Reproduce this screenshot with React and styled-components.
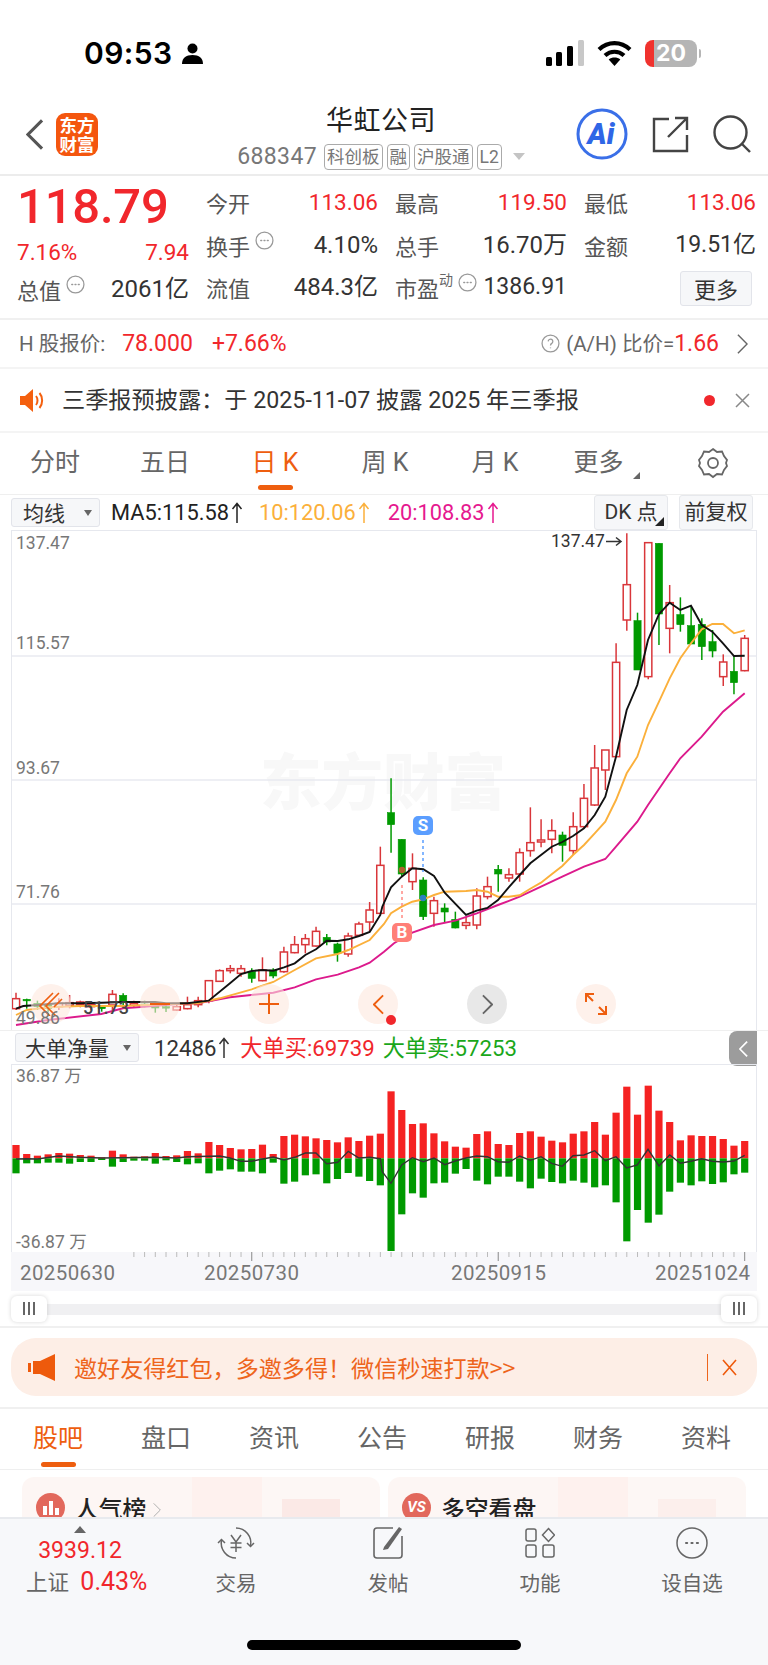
import React from 'react';
import styled, { createGlobalStyle } from 'styled-components';

const GlobalStyle = createGlobalStyle`
  html, body { margin: 0; padding: 0; background: #fff; }
  body { font-family: Roboto, "Noto Sans CJK SC", sans-serif; color: #333; }
  * { box-sizing: border-box; }
`;

const Page = styled.div`
  width: 768px;
  height: 1665px;
  overflow: hidden;
  position: relative;
  background: #fff;
`;

/* status bar */
const StatusBar = styled.div`
  height: 90px;
  padding: 16px 67px 0 84px;
  display: flex;
  align-items: center;
  justify-content: space-between;
`;
const Clock = styled.div`
  display: flex;
  align-items: center;
  gap: 9px;
  font: 600 30px Inter, sans-serif;
  letter-spacing: 0.4px;
  color: #000;
`;
const StatusIcons = styled.div`
  display: flex;
  align-items: center;
  gap: 13px;
`;
const Battery = styled.div`
  width: 52px;
  height: 27px;
  border-radius: 8px;
  overflow: hidden;
  background: linear-gradient(90deg, #f0322e 0 9px, #b5b5b5 9px);
  color: #fff;
  font: 700 23px/27px Inter, sans-serif;
  text-align: center;
`;
const BatteryWrap = styled.div`
  display: flex;
  align-items: center;
  gap: 2px;
  &::after {
    content: '';
    width: 2px;
    height: 9px;
    border-radius: 0 2px 2px 0;
    background: #b5b5b5;
  }
`;

/* nav */
const Nav = styled.div`
  height: 86px;
  display: grid;
  grid-template-columns: 226px 310px 1fr;
  align-items: center;
  border-bottom: 2px solid #ececec;
`;
const NavLeft = styled.div`
  display: flex;
  align-items: center;
  gap: 12px;
  padding: 4px 0 0 26px;
`;
const Logo = styled.div`
  width: 42px;
  height: 43px;
  border-radius: 9px;
  background: #f4560e;
  color: #fff;
  font: 700 17.5px/19px "Noto Sans CJK SC", sans-serif;
  text-align: center;
  padding-top: 2px;
`;
const NavCenter = styled.div`
  align-self: start;
  padding-top: 11px;
  display: flex;
  flex-direction: column;
  align-items: center;
`;
const Title = styled.div`
  font: 400 27px/36px "Noto Sans CJK SC", sans-serif;
  color: #222;
  letter-spacing: 0.5px;
`;
const SubRow = styled.div`
  margin-top: 6px;
  display: flex;
  align-items: center;
  gap: 4px;
`;
const Code = styled.span`
  font: 400 23px/27px Roboto, sans-serif;
  letter-spacing: 0.4px;
  color: #777;
  margin-right: 3px;
`;
const Tag = styled.span`
  border: 1px solid #aaa;
  border-radius: 4px;
  height: 26px;
  padding: 0 2px;
  font: 400 17.5px/24px Roboto, "Noto Sans CJK SC", sans-serif;
  color: #777;
`;
const Caret = styled.span`
  width: 0;
  height: 0;
  margin-left: 7px;
  border-left: 6px solid transparent;
  border-right: 6px solid transparent;
  border-top: 7px solid #c4c4c4;
`;
const NavRight = styled.div`
  display: flex;
  align-items: center;
  justify-content: flex-end;
  gap: 24px;
  padding: 4px 17px 0 0;
`;

/* quote */
const Quote = styled.div`
  height: 144px;
  display: flex;
  padding: 5px 12px 0 17px;
  border-bottom: 2px solid #f0f0f0;
`;
const QuoteLeft = styled.div`
  width: 172px;
  margin-right: 17px;
  flex: none;
`;
const Price = styled.div`
  font: 500 49px/52px Roboto, sans-serif;
  color: #f1272c;
  letter-spacing: -0.2px;
`;
const SplitRow = styled.div`
  height: 37px;
  display: flex;
  align-items: center;
  justify-content: space-between;
`;
const StatGrid = styled.div`
  flex: 1;
  display: grid;
  grid-template-columns: repeat(3, 172px);
  grid-auto-rows: 42.5px;
  column-gap: 17px;
`;
const Stat = styled.div`
  display: flex;
  align-items: center;
  justify-content: space-between;
`;
const StatLabel = styled.span`
  display: flex;
  align-items: flex-start;
  font: 400 22px/30px "Noto Sans CJK SC", sans-serif;
  color: #555;
  svg { margin: 1px 0 0 5px; }
`;
const Super = styled.sup`
  font-size: 14px;
  line-height: 14px;
  color: #666;
  vertical-align: top;
`;
const Value = styled.span`
  font: 400 ${p => p.$size || 22.5}px/30px Roboto, "Noto Sans CJK SC", sans-serif;
  color: ${p => (p.$red ? '#f1272c' : '#333')};
`;
const MoreButton = styled.div`
  width: 72px;
  height: 35px;
  margin: 3px 4px 0 auto;
  border: 1px solid #e2e4ea;
  border-radius: 3px;
  background: #f6f7f9;
  font: 400 22px/33px "Noto Sans CJK SC", sans-serif;
  color: #333;
  text-align: center;
`;

/* h share row */
const HRow = styled.div`
  height: 49px;
  display: flex;
  align-items: center;
  padding: 0 20px 0 19px;
  border-bottom: 2px solid #f4f4f4;
  font: 400 20.5px/28px Roboto, "Noto Sans CJK SC", sans-serif;
  color: #666;
`;
const RedText = styled.span`
  color: #f1272c;
  margin-left: ${p => p.$ml || 0}px;
  font-size: ${p => p.$size || 23}px;
`;
const RowEnd = styled.div`
  margin-left: auto;
  display: flex;
  align-items: center;
  gap: 6px;
`;

/* notice */
const Notice = styled.div`
  height: 64px;
  display: flex;
  align-items: center;
  padding: 0 18px 0 20px;
  border-bottom: 2px solid #f4f4f4;
  font: 400 23.2px/30px Roboto, "Noto Sans CJK SC", sans-serif;
  color: #333;
`;
const NoticeText = styled.span`
  margin-left: 18px;
  flex: 1;
`;
const RedDot = styled.span`
  width: 11px;
  height: 11px;
  border-radius: 50%;
  background: #f1272c;
  margin-right: 20px;
`;

/* period tabs */
const Tabs = styled.div`
  height: 61px;
  display: grid;
  grid-template-columns: ${p => p.$cols};
  padding-left: ${p => p.$pad || 0}px;
  border-bottom: ${p => (p.$line ? '1px solid #efefef' : 'none')};
`;
const TabItem = styled.div`
  position: relative;
  display: flex;
  justify-content: center;
  align-items: center;
  font: 400 ${p => p.$size || 25}px/34px Roboto, "Noto Sans CJK SC", sans-serif;
  color: ${p => (p.$active ? '#ee5e0f' : '#666')};
  padding-bottom: ${p => p.$pb ?? 2}px;
  &::after {
    content: '';
    display: ${p => (p.$active ? 'block' : 'none')};
    position: absolute;
    left: 50%;
    bottom: ${p => p.$ub ?? 4}px;
    width: 35px;
    height: 5px;
    margin-left: -17.5px;
    border-radius: 3px;
    background: #ee5e0f;
  }
`;
const MoreCorner = styled.span`
  position: absolute;
  right: 7px;
  bottom: 15px;
  width: 0;
  height: 0;
  border-left: 7px solid transparent;
  border-bottom: 7px solid #666;
`;

/* legend */
const LegendRow = styled.div`
  height: 36px;
  display: flex;
  align-items: center;
  padding: 0 15px 0 11px;
  font: 400 21.8px/30px Roboto, "Noto Sans CJK SC", sans-serif;
  border-top: 1px solid #efefef;
`;
const SelectBox = styled.div`
  width: ${p => p.$w}px;
  height: 29px;
  flex: none;
  display: flex;
  align-items: center;
  justify-content: space-between;
  padding: 0 7px 0 ${p => p.$pl || 11}px;
  background: #f6f7f9;
  border: 1px solid #e2e4ea;
  border-radius: 3px;
  font: 400 21px/27px "Noto Sans CJK SC", sans-serif;
  color: #333;
`;
const DownTri = styled.span`
  width: 0;
  height: 0;
  border-left: 4px solid transparent;
  border-right: 4px solid transparent;
  border-top: 6px solid #666;
`;
const Reading = styled.span`
  display: inline-flex;
  align-items: center;
  gap: 2px;
  margin-left: ${p => p.$ml}px;
  color: ${p => p.$color};
  white-space: nowrap;
`;
const LegendButton = styled.div`
  position: relative;
  flex: none;
  width: 74px;
  height: 35px;
  margin-left: ${p => p.$ml};
  background: #f6f7f9;
  border: 1px solid #e6e8ec;
  border-radius: 3px;
  font: 400 21px/33px Roboto, "Noto Sans CJK SC", sans-serif;
  color: #333;
  text-align: center;
`;
const BoxCorner = styled.span`
  position: absolute;
  right: 3px;
  bottom: 3px;
  width: 0;
  height: 0;
  border-left: 9px solid transparent;
  border-bottom: 9px solid #222;
`;

/* charts */
const ChartBox = styled.div`
  position: relative;
  width: 746px;
  height: ${p => p.$h}px;
  margin-left: 11px;
  border-left: 1px solid #e6e8ee;
  border-right: 1px solid #e6e8ee;
  border-top: 1px solid #e6e8ee;
  svg { display: block; }
`;
const ChartLayer = styled.div`
  position: relative;
`;
const AxisLabel = styled.span`
  position: absolute;
  left: 4px;
  top: ${p => p.$top}px;
  font: 400 17.5px/20px Roboto, "Noto Sans CJK SC", sans-serif;
  color: #777;
`;
const PeakLabel = styled.span`
  position: absolute;
  left: 539px;
  top: 0;
  font: 400 17.5px/20px Roboto, sans-serif;
  color: #333;
`;
const LastLabel = styled.span`
  position: absolute;
  left: 71px;
  top: 467px;
  font: 500 18px/20px Roboto, sans-serif;
  color: #444;
`;
const Watermark = styled.div`
  position: absolute;
  left: 248px;
  top: 213px;
  font: 900 61.5px/70px "Noto Sans CJK SC", sans-serif;
  color: #f8f8f8;
  white-space: nowrap;
`;
const Controls = styled.div`
  position: absolute;
  left: 19px;
  top: 453px;
  display: flex;
  gap: 69px;
`;
const RoundButton = styled.div`
  width: 40px;
  height: 40px;
  border-radius: 50%;
  display: flex;
  align-items: center;
  justify-content: center;
  background: ${p => (p.$gray ? 'rgba(228,228,228,0.85)' : 'rgba(253,232,222,0.6)')};
  position: relative;
`;
const ControlDot = styled.span`
  position: absolute;
  left: 28px;
  top: 31px;
  width: 10px;
  height: 10px;
  border-radius: 50%;
  background: #f1272c;
`;
const Badge = styled.span`
  position: absolute;
  left: ${p => p.$x}px;
  top: ${p => p.$y}px;
  width: 20px;
  height: 19px;
  border-radius: 5px;
  background: ${p => p.$bg};
  color: #fff;
  font: 700 17px/19px Roboto, sans-serif;
  text-align: center;
`;

const VolHead = styled.div`
  position: relative;
  height: 34px;
  display: flex;
  align-items: center;
  padding-left: 15px;
  font: 400 22.2px/28px Roboto, "Noto Sans CJK SC", sans-serif;
  border-top: 1px solid #efefef;
`;
const SideTab = styled.div`
  position: absolute;
  left: 729px;
  top: 0;
  width: 28px;
  height: 35px;
  border-radius: 8px 0 0 8px;
  background: #9c9c9c;
  display: flex;
  align-items: center;
  justify-content: center;
`;
const AxisBand = styled.div`
  position: relative;
  width: 746px;
  height: 39px;
  margin-left: 11px;
  background: #f7f7fa;
  svg { display: block; }
`;
const AxisDate = styled.span`
  position: absolute;
  left: ${p => p.$x}px;
  top: 10px;
  font: 400 20.5px/22px Roboto, sans-serif;
  letter-spacing: 0.4px;
  color: #777;
`;
const Scroller = styled.div`
  position: relative;
  width: 746px;
  height: 35px;
  margin-left: 11px;
  display: flex;
  align-items: center;
  justify-content: space-between;
  &::before {
    content: '';
    position: absolute;
    left: 0;
    right: 0;
    top: 13px;
    height: 11px;
    background: #f0f0f2;
  }
`;
const Handle = styled.div`
  position: relative;
  width: 36px;
  height: 26px;
  border-radius: 6px;
  background: #fff;
  box-shadow: 0 0 4px rgba(0, 0, 0, 0.16);
  display: flex;
  align-items: center;
  justify-content: center;
  gap: 3px;
  span {
    width: 2px;
    height: 13px;
    background: #666;
  }
`;
const Rule = styled.div`
  height: 2px;
  background: #f0f0f0;
`;

/* promo banner */
const Banner = styled.div`
  height: 58px;
  margin: 10px 11px 11px;
  padding: 0 20px 0 17px;
  border-radius: 25px;
  background: #fdeee6;
  display: flex;
  align-items: center;
  font: 400 23.1px/30px "Noto Sans CJK SC", sans-serif;
  color: #ee651c;
`;
const BannerText = styled.span`
  margin-left: 18px;
  flex: 1;
`;
const BannerSep = styled.span`
  width: 1px;
  height: 27px;
  background: #ee651c;
  margin-right: 14px;
`;

/* feed */
const Feed = styled.div`
  height: 47px;
  padding: 7px 22px 0;
  display: grid;
  grid-template-columns: 358px 358px;
  column-gap: 8px;
  overflow: hidden;
`;
const FeedCard = styled.div`
  position: relative;
  height: 80px;
  border-radius: 12px;
  background: linear-gradient(90deg, #fdf6f4 0 170px, #fef1ee 170px 240px, #fdf7f5 240px);
  padding: 16px 14px;
  display: flex;
  align-items: flex-start;
  align-self: start;
  gap: 10px;
  &::after {
    content: '';
    position: absolute;
    left: ${p => p.$shapeX}px;
    top: 22px;
    width: 58px;
    height: 60px;
    background: ${p => p.$shape};
  }
`;
const FeedIcon = styled.span`
  flex: none;
  width: 29px;
  height: 29px;
  border-radius: 50%;
  background: #e2685c;
  display: flex;
  align-items: center;
  justify-content: center;
  color: #fff;
  font: italic 700 15px/29px Roboto, sans-serif;
`;
const FeedTitle = styled.span`
  font: 500 23.8px/30px "Noto Sans CJK SC", sans-serif;
  color: #222;
  svg { margin-left: 7px; }
`;

/* bottom bar */
const BottomBar = styled.div`
  position: absolute;
  left: 0;
  right: 0;
  bottom: 0;
  height: 148px;
  background: #f7f8fa;
  border-top: 2px solid #e8eaee;
  display: grid;
  grid-template-columns: 160px repeat(4, 152px);
`;
const IndexCell = styled.div`
  display: flex;
  flex-direction: column;
  align-items: center;
  padding-top: 7px;
`;
const UpTri = styled.span`
  width: 0;
  height: 0;
  border-left: 6px solid transparent;
  border-right: 6px solid transparent;
  border-bottom: 7px solid #666;
`;
const IndexValue = styled.span`
  margin-top: 4px;
  font: 400 23px/28px Roboto, sans-serif;
  color: #f1272c;
`;
const IndexRow = styled.span`
  align-self: flex-start;
  margin: 1px 0 0 26px;
  font: 400 21.5px/32px Roboto, "Noto Sans CJK SC", sans-serif;
  color: #666;
  white-space: nowrap;
`;
const DockItem = styled.div`
  display: flex;
  flex-direction: column;
  align-items: center;
  padding-top: 1px;
  font: 400 20.5px/28px "Noto Sans CJK SC", sans-serif;
  color: #666;
  svg { margin-bottom: 2px; }
`;
const HomeBar = styled.div`
  position: absolute;
  left: 247px;
  bottom: 15px;
  width: 274px;
  height: 10px;
  border-radius: 5px;
  background: #000;
`;

/* chart data, read in 3x zoom coordinates */
const c3 = (...r) => r;
const candles = [
  c3('r',1388,1406,1436,1440),c3('g',1406,1408,1412,1436),c3('g',1412,1420,1430,1440),c3('g',1420,1425,1435,1445),
  c3('r',1405,1420,1430,1440),c3('r',1395,1418,1426,1435),c3('r',1412,1416,1424,1432),c3('r',1420,1424,1430,1440),
  c3('g',1425,1430,1436,1445),c3('r',1380,1393,1425,1440),c3('g',1390,1396,1418,1430),c3('r',1412,1420,1426,1432),
  c3('g',1412,1422,1426,1432),c3('g',1418,1428,1434,1448),c3('g',1422,1430,1434,1446),c3('r',1420,1430,1440,1442),
  c3('r',1400,1424,1436,1438),c3('r',1400,1412,1424,1432),c3('r',1350,1352,1412,1420),c3('r',1318,1322,1354,1356),
  c3('r',1305,1316,1322,1330),c3('r',1305,1316,1330,1340),c3('g',1315,1325,1345,1358),c3('r',1282,1320,1352,1354),
  c3('g',1315,1320,1338,1345),c3('r',1250,1266,1325,1328),c3('r',1218,1244,1268,1270),c3('r',1212,1226,1244,1270),
  c3('r',1190,1204,1248,1250),c3('g',1212,1222,1236,1246),c3('g',1238,1242,1270,1295),c3('r',1208,1218,1272,1280),
  c3('r',1175,1182,1216,1220),c3('r',1116,1140,1176,1205),c3('r',950,1006,1150,1150),
  c3('g',745,848,884,968),c3('g',928,928,1032,1040),c3('r',970,1015,1055,1080),c3('g',1042,1050,1160,1170),
  c3('r',1100,1112,1150,1190),c3('g',1120,1134,1146,1178),c3('g',1145,1168,1194,1195),c3('r',1160,1178,1186,1198),
  c3('r',1075,1098,1185,1198),c3('r',1040,1070,1100,1108),c3('g',1005,1018,1032,1085),c3('r',1015,1034,1044,1055),
  c3('r',955,968,1032,1055),c3('r',832,938,962,980),c3('r',868,930,936,952),c3('r',868,902,928,970),
  c3('g',905,915,946,995),c3('r',847,890,962,975),c3('r',762,805,890,895),c3('r',645,714,825,828),
  c3('r',660,660,720,780),c3('r',340,397,680,680),c3('r',10,164,270,302),c3('g',248,272,420,420),
  c3('r',38,38,440,448),c3('g',40,40,252,345),c3('r',165,218,295,370),c3('g',202,254,284,305),
  c3('g',228,287,342,342),c3('g',265,283,350,390),c3('g',300,335,363,382),c3('r',373,396,440,468),
  c3('g',378,424,458,493),c3('r',315,325,422,424),
];
const STEP = 10.716;
const cx = (i) => 16 + i * STEP;
const py = (z) => 530 + z / 3;

// pts before the split are in the left crop, after it in the right crop
const toPoints = (left, right, base) => [
  ...left.map(([x, y]) => `${(x / 3).toFixed(1)},${(base + y / 3).toFixed(1)}`),
  ...right.map(([x, y]) => `${(384 + x / 3).toFixed(1)},${(base + y / 3).toFixed(1)}`),
].join(' ');

const ma5 = toPoints(
  [[48,1436],[70,1428],[112,1425],[176,1420],[240,1420],[304,1418],[369,1416],[465,1416],[498,1420],[562,1420],[626,1412],[690,1360],[723,1332],[755,1323],[788,1320],[820,1322],[852,1312],[884,1300],[916,1275],[948,1258],[980,1232],[1013,1233],[1045,1228],[1077,1218],[1109,1206],[1141,1155]],
  [[-5,1130],[21,1072],[53,1040],[85,1015],[118,1018],[150,1038],[182,1088],[246,1155],[278,1142],[310,1134],[342,1110],[374,1072],[407,1035],[439,1000],[471,975],[503,950],[535,936],[567,918],[600,895],[632,855],[664,800],[696,680],[728,540],[760,465],[792,330],[825,252],[857,218],[889,240],[921,227],[953,285],[985,305],[1017,340],[1050,378],[1082,377]],
  530,
);
const ma10 = toPoints(
  [[48,1455],[80,1440],[144,1432],[240,1428],[369,1428],[498,1422],[594,1420],[659,1405],[755,1378],[820,1356],[884,1320],[948,1285],[1013,1272],[1045,1260],[1109,1230]],
  [[0,1182],[21,1150],[53,1130],[85,1115],[118,1108],[150,1095],[182,1085],[246,1083],[278,1080],[310,1085],[342,1100],[374,1100],[407,1096],[439,1076],[471,1058],[503,1033],[535,1008],[567,975],[600,945],[632,910],[664,875],[696,810],[728,730],[760,680],[792,585],[825,515],[857,445],[889,385],[921,340],[953,298],[985,282],[1017,282],[1050,310],[1082,301]],
  530,
);
const ma20 = toPoints(
  [[48,1485],[144,1470],[304,1452],[369,1435],[433,1430],[530,1422],[594,1420],[690,1402],[820,1388],[884,1372],[948,1348],[1013,1334],[1077,1312],[1109,1298]],
  [[0,1265],[30,1240],[85,1208],[150,1185],[214,1172],[278,1150],[342,1125],[407,1100],[471,1070],[535,1040],[600,1010],[664,987],[696,950],[760,875],[792,825],[857,730],[889,685],[953,620],[1017,545],[1082,490]],
  530,
);
const volBars = [
  [345,430],[372,400],[377,400],[373,398],[369,398],[371,401],[375,396],[377,396],[382,390],[362,410],[373,396],[380,392],[379,392],[369,401],[378,391],[376,396],[363,403],[370,400],[336,430],[345,422],[354,418],[358,425],[357,425],[344,430],[372,398],[318,461],[314,455],[319,436],[325,433],[330,460],[337,447],[322,429],[333,440],[317,453],[311,466],
  [184,663],[240,553],[282,490],[280,503],[310,460],[334,458],[350,431],[353,417],[312,452],[304,463],[342,440],[345,440],[309,455],[304,475],[320,446],[332,456],[337,460],[311,452],[304,458],[276,472],[314,466],[248,517],[170,634],[254,540],[167,578],[242,554],[276,485],[331,458],[316,466],[318,454],[318,462],[327,457],[347,433],[333,428],
];
const volLine = toPoints(
  [[48,387],[80,386],[112,387],[176,378],[240,382],[304,384],[369,383],[465,382],[530,384],[562,380],[626,379],[659,378],[690,384],[723,394],[755,394],[788,387],[820,381],[852,390],[884,382],[916,369],[948,369],[980,401],[1013,397],[1045,364],[1077,384],[1109,382],[1141,386]],
  [[-5,425],[21,460],[53,405],[85,383],[118,395],[150,384],[182,404],[214,393],[246,384],[278,378],[310,380],[342,395],[374,397],[407,378],[439,391],[471,380],[503,400],[535,409],[567,377],[600,375],[632,362],[664,392],[696,380],[728,414],[760,405],[792,358],[825,408],[857,375],[889,400],[921,394],[953,386],[985,394],[1017,396],[1050,393],[1082,376]],
  1030,
);

const UpArrow = ({ color }) => (
  <svg width="12" height="22" viewBox="0 0 12 22" fill="none" stroke={color} strokeWidth="1.5">
    <path d="M6 21V2M1.5 7 6 1.5 10.5 7" />
  </svg>
);

const Hint = ({ mark = 'dots', size = 19 }) => (
  <svg width={size} height={size} viewBox="0 0 18 18" fill="none" stroke="#999" strokeWidth="1.2" style={{ flex: 'none' }}>
    <circle cx="9" cy="9" r="8" />
    {mark === 'dots' ? (
      <path d="M5.5 9h.8M8.6 9h.8M11.7 9h.8" strokeWidth="1.4" strokeLinecap="round" />
    ) : (
      <path d="M6.8 7a2.2 2.2 0 1 1 3.4 1.9c-.8.5-1.2 1-1.2 1.9M9 12.8v.6" />
    )}
  </svg>
);

const Chevron = ({ dir = 'left', color = '#ee5e0f', w = 12, h = 22, sw = 2 }) => (
  <svg width={w} height={h} viewBox="0 0 12 22" fill="none" stroke={color} strokeWidth={sw}>
    <path d={dir === 'left' ? 'M11 1 1 11l10 10' : 'M1 1l10 10L1 21'} />
  </svg>
);

function CandleChart() {
  return (
    <svg width="744" height="499" viewBox="12 531 744 499">
      {[656, 780, 904].map(y => (
        <line key={y} x1="12" x2="756" y1={y} y2={y} stroke="#e9eaf0" strokeWidth="1.5" />
      ))}
      {candles.map(([t, wt, bt, bb, wb], i) => {
        const color = t === 'r' ? '#d9363a' : '#009a00';
        const x = cx(i);
        return (
          <g key={i}>
            <line x1={x} x2={x} y1={py(wt)} y2={py(wb)} stroke={color} strokeWidth="1.5" />
            <rect
              x={x - 3.6}
              y={py(bt)}
              width="7.2"
              height={Math.max(1.5, (bb - bt) / 3)}
              fill={t === 'r' ? '#fff' : color}
              stroke={color}
              strokeWidth={t === 'r' ? 1.5 : 0.6}
            />
          </g>
        );
      })}
      <polyline points={ma20} fill="none" stroke="#dc1a8c" strokeWidth="1.9" />
      <polyline points={ma10} fill="none" stroke="#fbb03b" strokeWidth="1.9" />
      <polyline points={ma5} fill="none" stroke="#111" strokeWidth="1.9" />
      <line x1="402" x2="402" y1="885" y2="921" stroke="#ff8a84" strokeWidth="1.5" strokeDasharray="3 3" />
      <line x1="423" x2="423" y1="840" y2="872" stroke="#5b9eff" strokeWidth="1.5" strokeDasharray="3 3" />
      <circle cx="402" cy="870" r="3.2" fill="#b0602c" />
      <circle cx="423" cy="898" r="3.2" fill="#2b7fc0" />
      <path d="M606 541.5h15M616 537.5l5 4-5 4" fill="none" stroke="#333" strokeWidth="1.5" />
    </svg>
  );
}

function VolumeChart() {
  const zero = 1030 + 385 / 3;
  return (
    <svg width="744" height="187" viewBox="12 1065 744 187">
      {volBars.map(([top, bottom], i) => {
        const x = cx(i) - 3.6;
        const t = 1030 + top / 3;
        const b = 1030 + bottom / 3;
        return (
          <g key={i}>
            <rect x={x} y={t} width="7.2" height={zero - t} fill="#f52222" />
            <rect x={x} y={zero} width="7.2" height={b - zero} fill="#009a00" />
          </g>
        );
      })}
      <polyline points={volLine} fill="none" stroke="#333" strokeWidth="1.4" />
    </svg>
  );
}

function Ticks() {
  const ticks = [];
  for (let i = 11; i <= 68; i++) {
    const long = i === 22 || i === 45 || i === 68;
    ticks.push(
      <line key={i} x1={cx(i) - 11} x2={cx(i) - 11} y1="0" y2={long ? 9 : 5} stroke={long ? '#888' : '#bbb'} strokeWidth="1" />,
    );
  }
  return <svg width="746" height="10" viewBox="0 0 746 10">{ticks}</svg>;
}

export default function App() {
  return (
    <Page>
      <GlobalStyle />
      <StatusBar>
        <Clock>
          09:53
          <svg width="21" height="21" viewBox="0 0 21 21" fill="#000">
            <circle cx="10.5" cy="5.5" r="5" />
            <path d="M0 21c0-6 4-9 10.5-9S21 15 21 21z" />
          </svg>
        </Clock>
        <StatusIcons>
          <svg width="38" height="26" viewBox="0 0 38 26">
            <rect x="0" y="17" width="6" height="9" rx="1.5" fill="#000" />
            <rect x="10" y="12" width="6" height="14" rx="1.5" fill="#000" />
            <rect x="21" y="6" width="6" height="20" rx="1.5" fill="#000" />
            <rect x="32" y="0" width="6" height="26" rx="1.5" fill="#c8c8c8" />
          </svg>
          <svg width="35" height="26" viewBox="0 0 35 26" fill="none" stroke="#000" strokeWidth="4.2">
            <path d="M2 9.5c9-8.5 22-8.5 31 0" />
            <path d="M8 15.5c5.5-5 13.5-5 19 0" />
            <path d="M17.5 26l-5.8-6.5c3.3-2.6 8.3-2.6 11.6 0z" fill="#000" stroke="none" />
          </svg>
          <BatteryWrap>
            <Battery>20</Battery>
          </BatteryWrap>
        </StatusIcons>
      </StatusBar>

      <Nav>
        <NavLeft>
          <Chevron color="#555" w={18} h={31} sw={2.2} />
          <Logo>东方<br />财富</Logo>
        </NavLeft>
        <NavCenter>
          <Title>华虹公司</Title>
          <SubRow>
            <Code>688347</Code>
            <Tag>科创板</Tag>
            <Tag>融</Tag>
            <Tag>沪股通</Tag>
            <Tag>L2</Tag>
            <Caret />
          </SubRow>
        </NavCenter>
        <NavRight>
          <svg width="52" height="52" viewBox="0 0 52 52">
            <circle cx="26" cy="26" r="24" fill="#fff" stroke="#3a6fe8" strokeWidth="3" />
            <text x="25" y="36" textAnchor="middle" fontFamily="Roboto, sans-serif" fontWeight="900" fontStyle="italic" fontSize="29" fill="#2f66e6">Ai</text>
          </svg>
          <svg width="37" height="37" viewBox="0 0 37 37" fill="none" stroke="#444" strokeWidth="2.4">
            <path d="M17 3H2v32h33V19" />
            <path d="M16 21 34 3M23 2h12v12" />
          </svg>
          <svg width="38" height="38" viewBox="0 0 38 38" fill="none" stroke="#444" strokeWidth="2.4">
            <circle cx="17.5" cy="17.5" r="16" />
            <path d="m29 29 8 8" />
          </svg>
        </NavRight>
      </Nav>

      <Quote>
        <QuoteLeft>
          <Price>118.79</Price>
          <SplitRow>
            <Value $red>7.16%</Value>
            <Value $red>7.94</Value>
          </SplitRow>
          <SplitRow>
            <StatLabel>总值<Hint /></StatLabel>
            <Value $size={24}>2061亿</Value>
          </SplitRow>
        </QuoteLeft>
        <StatGrid>
          <Stat><StatLabel>今开</StatLabel><Value $red>113.06</Value></Stat>
          <Stat><StatLabel>最高</StatLabel><Value $red>119.50</Value></Stat>
          <Stat><StatLabel>最低</StatLabel><Value $red>113.06</Value></Stat>
          <Stat><StatLabel>换手<Hint /></StatLabel><Value $size={24}>4.10%</Value></Stat>
          <Stat><StatLabel>总手</StatLabel><Value $size={24}>16.70万</Value></Stat>
          <Stat><StatLabel>金额</StatLabel><Value $size={23}>19.51亿</Value></Stat>
          <Stat><StatLabel>流值</StatLabel><Value $size={24}>484.3亿</Value></Stat>
          <Stat><StatLabel>市盈<Super>动</Super><Hint /></StatLabel><Value $size={23}>1386.91</Value></Stat>
          <Stat><MoreButton>更多</MoreButton></Stat>
        </StatGrid>
      </Quote>

      <HRow>
        H 股报价:
        <RedText $ml={17}>78.000</RedText>
        <RedText $ml={19}>+7.66%</RedText>
        <RowEnd>
          <Hint mark="q" size={19} />
          <span>(A/H) 比价=<RedText>1.66</RedText></span>
          <span style={{ width: 6 }} />
          <Chevron dir="right" color="#666" w={11} h={22} sw={1.6} />
        </RowEnd>
      </HRow>

      <Notice>
        <svg width="24" height="25" viewBox="0 0 24 25" fill="#f4600f">
          <path d="M0 8h5l8-7v23l-8-7H0z" />
          <path d="M16 8c2 2.5 2 6.5 0 9M19.5 5c3.5 4 3.5 11 0 15" fill="none" stroke="#f4600f" strokeWidth="2" />
        </svg>
        <NoticeText>三季报预披露：于 2025-11-07 披露 2025 年三季报</NoticeText>
        <RedDot />
        <svg width="15" height="15" viewBox="0 0 15 15" stroke="#888" strokeWidth="1.5">
          <path d="m1 1 13 13M14 1 1 14" />
        </svg>
      </Notice>

      <Tabs $cols="110px 110px 110px 110px 110px 97px 132px">
        <TabItem>分时</TabItem>
        <TabItem>五日</TabItem>
        <TabItem $active>日 K</TabItem>
        <TabItem>周 K</TabItem>
        <TabItem>月 K</TabItem>
        <TabItem>更多<MoreCorner /></TabItem>
        <TabItem>
          <svg width="30" height="32" viewBox="0 0 30 32" fill="none" stroke="#666" strokeWidth="1.8">
            <path d="M15 2l4 3 5-.5 2 4.5 3 4-1 3 1 3-3 4-2 4.5-5-.5-4 3-4-3-5 .5-2-4.5-3-4 1-3-1-3 3-4 2-4.5 5 .5z" />
            <circle cx="15" cy="16" r="5" />
          </svg>
        </TabItem>
      </Tabs>

      <LegendRow>
        <SelectBox $w={89}>均线<DownTri /></SelectBox>
        <Reading $ml={11} $color="#222">MA5:115.58<UpArrow color="#222" /></Reading>
        <Reading $ml={16} $color="#fbb03b">10:120.06<UpArrow color="#fbb03b" /></Reading>
        <Reading $ml={18} $color="#e6188f">20:108.83<UpArrow color="#e6188f" /></Reading>
        <LegendButton $ml="auto">DK 点<BoxCorner /></LegendButton>
        <LegendButton $ml="11px">前复权</LegendButton>
      </LegendRow>

      <ChartBox $h={500}>
        <Watermark>东方财富</Watermark>
        <ChartLayer><CandleChart /></ChartLayer>
        <Controls>
          <RoundButton>
            <svg width="24" height="24" viewBox="0 0 24 24" fill="none" stroke="#ee5e0f" strokeWidth="1.6">
              <path d="M14 1 1 14l10 10M20 1 7 14l10 10M23 7l-8 8" />
            </svg>
          </RoundButton>
          <RoundButton>
            <svg width="20" height="2" viewBox="0 0 20 2"><rect width="20" height="2" fill="#ee5e0f" /></svg>
          </RoundButton>
          <RoundButton>
            <svg width="20" height="20" viewBox="0 0 20 20" stroke="#ee5e0f" strokeWidth="2"><path d="M0 10h20M10 0v20" /></svg>
          </RoundButton>
          <RoundButton>
            <Chevron w={11} h={21} />
            <ControlDot />
          </RoundButton>
          <RoundButton $gray>
            <Chevron dir="right" color="#666" w={11} h={21} />
          </RoundButton>
          <RoundButton>
            <svg width="22" height="22" viewBox="0 0 22 22" fill="none" stroke="#ee5e0f" strokeWidth="2">
              <path d="M1 9V1h8M1 1l7 7M21 13v8h-8M21 21l-7-7" />
            </svg>
          </RoundButton>
        </Controls>
        <AxisLabel $top={2}>137.47</AxisLabel>
        <AxisLabel $top={102}>115.57</AxisLabel>
        <AxisLabel $top={227}>93.67</AxisLabel>
        <AxisLabel $top={351}>71.76</AxisLabel>
        <AxisLabel $top={477}>49.86</AxisLabel>
        <PeakLabel>137.47</PeakLabel>
        <LastLabel>51.73</LastLabel>
        <Badge $x={401} $y={285} $bg="#5b9eff">S</Badge>
        <Badge $x={380} $y={392} $bg="#ff7f78">B</Badge>
      </ChartBox>

      <VolHead>
        <SelectBox $w={124} $pl={9}>大单净量<DownTri /></SelectBox>
        <Reading $ml={15} $color="#333">12486<UpArrow color="#333" /></Reading>
        <Reading $ml={10} $color="#f1272c">大单买:69739</Reading>
        <Reading $ml={8} $color="#1aa71a">大单卖:57253</Reading>
        <SideTab><Chevron color="#fff" w={9} h={16} sw={2.4} /></SideTab>
      </VolHead>

      <ChartBox $h={188}>
        <VolumeChart />
        <AxisLabel $top={1}>36.87 万</AxisLabel>
        <AxisLabel $top={167}>-36.87 万</AxisLabel>
      </ChartBox>

      <AxisBand>
        <Ticks />
        <AxisDate $x={9}>20250630</AxisDate>
        <AxisDate $x={193}>20250730</AxisDate>
        <AxisDate $x={440}>20250915</AxisDate>
        <AxisDate $x={644}>20251024</AxisDate>
      </AxisBand>

      <Scroller>
        <Handle><span /><span /><span /></Handle>
        <Handle><span /><span /><span /></Handle>
      </Scroller>

      <Rule />

      <Banner>
        <svg width="28" height="27" viewBox="0 0 28 27" fill="#ee5a0c">
          <rect x="0" y="9" width="3" height="9" />
          <path d="M5 7h7L27 0v27L12 20H5z" />
        </svg>
        <BannerText>邀好友得红包，多邀多得！微信秒速打款&gt;&gt;</BannerText>
        <BannerSep />
        <svg width="15" height="17" viewBox="0 0 15 17" stroke="#ee5a0c" strokeWidth="1.6">
          <path d="m1 1 13 15M14 1 1 16" />
        </svg>
      </Banner>

      <Rule />

      <Tabs $cols="108px 108px 108px 108px 108px 108px 108px" $pad={4} $line>
        <TabItem $active $ub={2} $pb={0}>股吧</TabItem>
        <TabItem $pb={0}>盘口</TabItem>
        <TabItem $pb={0}>资讯</TabItem>
        <TabItem $pb={0}>公告</TabItem>
        <TabItem $pb={0}>研报</TabItem>
        <TabItem $pb={0}>财务</TabItem>
        <TabItem $pb={0}>资料</TabItem>
      </Tabs>

      <Feed>
        <FeedCard $shapeX={260} $shape="#fbe9e6">
          <FeedIcon>
            <svg width="18" height="15" viewBox="0 0 18 15" fill="#fff"><rect x="1" y="6" width="4" height="9" /><rect x="7" y="1" width="4" height="14" /><rect x="13" y="8" width="4" height="7" /></svg>
          </FeedIcon>
          <FeedTitle>人气榜<Chevron dir="right" color="#aaa" w={8} h={16} sw={1.4} /></FeedTitle>
        </FeedCard>
        <FeedCard $shapeX={270} $shape="#fcefec">
          <FeedIcon>VS</FeedIcon>
          <FeedTitle>多空看盘</FeedTitle>
        </FeedCard>
      </Feed>

      <BottomBar>
        <IndexCell>
          <UpTri />
          <IndexValue>3939.12</IndexValue>
          <IndexRow>上证 <RedText $ml={6} $size={25}>0.43%</RedText></IndexRow>
        </IndexCell>
        <DockItem>
          <svg width="38" height="46" viewBox="0 0 38 46" fill="none" stroke="#666" strokeWidth="1.5">
            <path d="M19 8A15 15 0 0 1 33.5 26M19 38A15 15 0 0 1 4.5 20" />
            <path d="M30 23l3.5 3.5 3.5-3.5M1 23l3.5-3.5 3.5 3.5" />
            <path d="M14 15l5 7 5-7M13.5 23h11M13.5 27.5h11M19 22v10" />
          </svg>
          交易
        </DockItem>
        <DockItem>
          <svg width="32" height="46" viewBox="0 0 32 46" fill="none" stroke="#666" strokeWidth="1.6">
            <path d="M21 8H5a3 3 0 0 0-3 3v24a3 3 0 0 0 3 3h22a3 3 0 0 0 3-3V16" />
            <path d="M12 27 27 7l3 2-14 20-5 1z" fill="#666" stroke="none" />
          </svg>
          发帖
        </DockItem>
        <DockItem>
          <svg width="30" height="46" viewBox="0 0 30 46" fill="none" stroke="#666" strokeWidth="1.5">
            <rect x="1" y="9" width="10" height="12" rx="2" />
            <rect x="1" y="25" width="10" height="12" rx="2" />
            <rect x="18" y="25" width="11" height="12" rx="2" />
            <path d="M23.5 8.5l6 6.5-6 6.5-6-6.5z" />
          </svg>
          功能
        </DockItem>
        <DockItem>
          <svg width="32" height="46" viewBox="0 0 32 46" fill="none" stroke="#666" strokeWidth="1.5">
            <circle cx="16" cy="23" r="15" />
            <path d="M10 23h1.2M15.4 23h1.2M20.8 23H22" strokeWidth="2" strokeLinecap="round" />
          </svg>
          设自选
        </DockItem>
        <HomeBar />
      </BottomBar>
    </Page>
  );
}
